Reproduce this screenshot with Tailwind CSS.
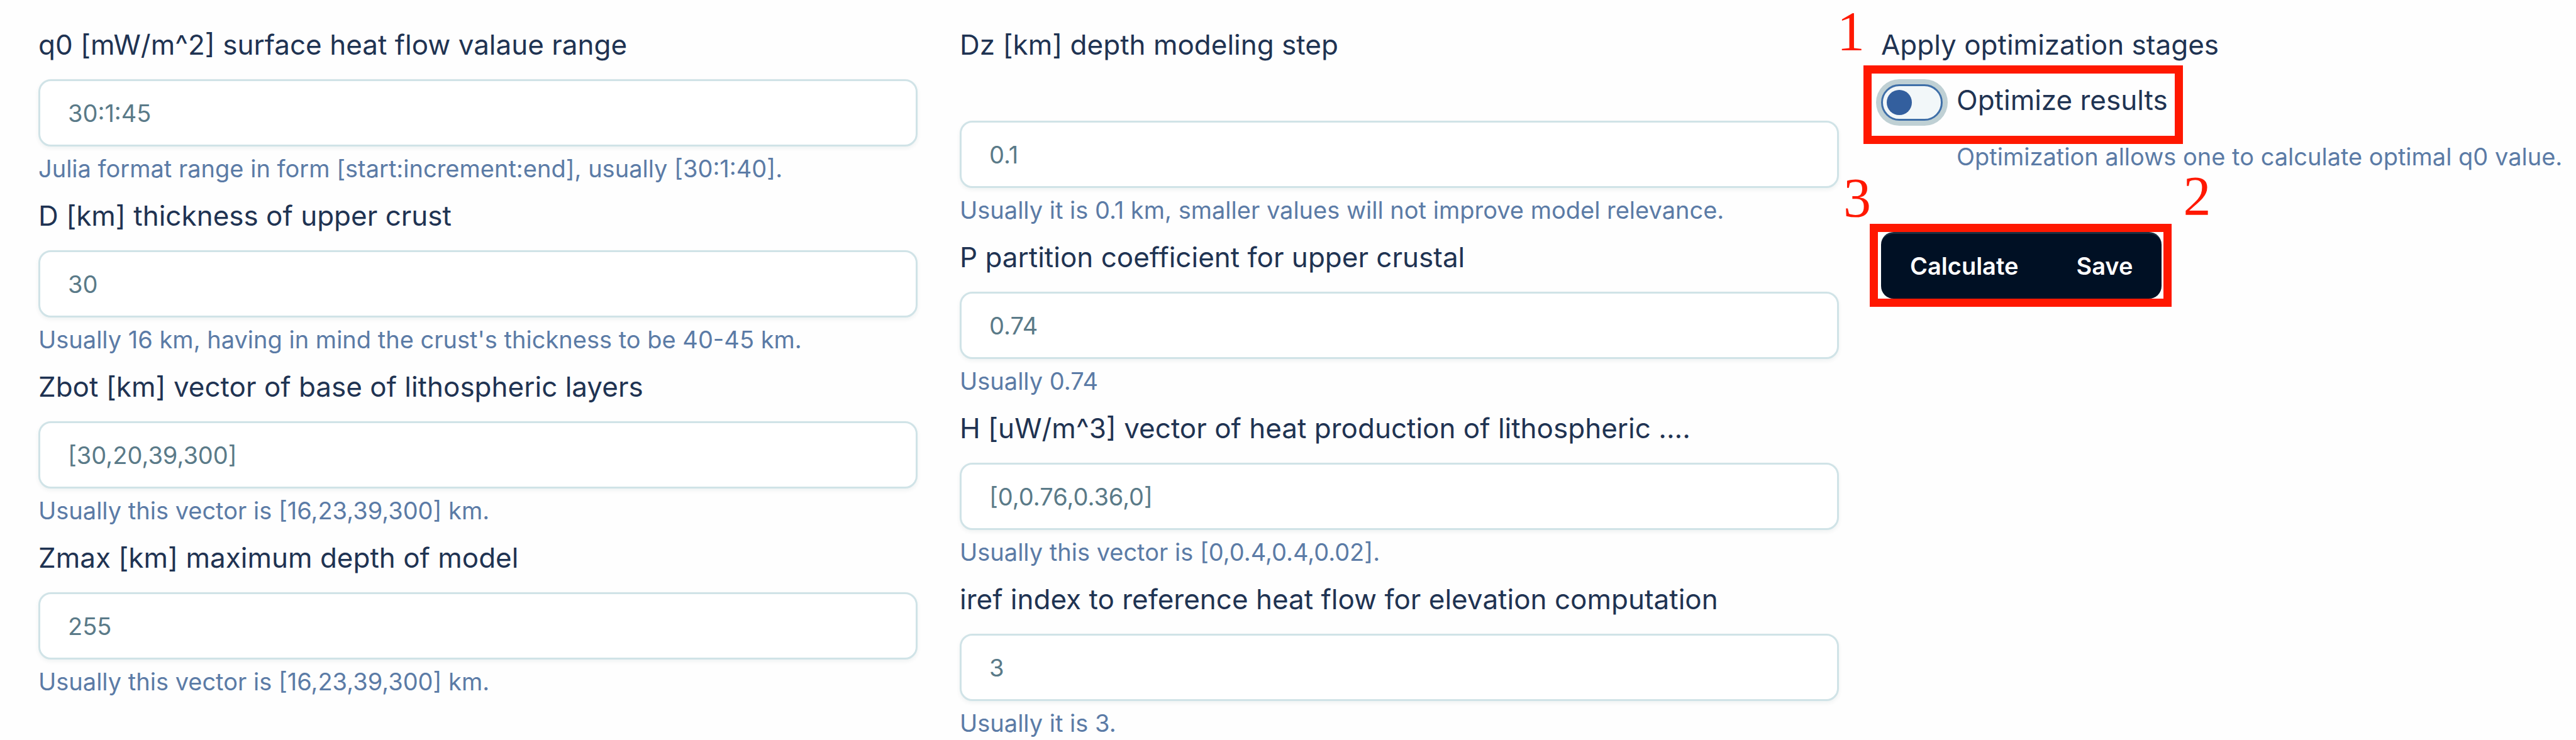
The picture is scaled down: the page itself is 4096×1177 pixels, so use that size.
<!DOCTYPE html>
<html lang="en">
<head>
<meta charset="utf-8">
<title>Model parameters</title>
<script src="https://cdn.jsdelivr.net/npm/@tailwindcss/browser@4"></script>
</head>
<body class="bg-[#fefefe] font-['Inter',sans-serif] text-[#1f3352]">
<form class="grid grid-cols-[1398fr_1398fr_1105fr] gap-x-[67px] pt-[38px] pl-[61px]">
  <section class="flex flex-col gap-[14px]">
    <div class="flex flex-col">
      <label for="q0" class="mb-[22px] text-[44px] leading-[66px]">q0 [mW/m^2] surface heat flow valaue range</label>
      <input id="q0" value="30:1:45" class="h-[107px] w-full rounded-[20px] border-3 border-[#d0e3e7] bg-white px-[44px] text-[38px] text-[#5a7a88] shadow-[0_3px_6px_#00404010]">
      <p class="mt-[7px] text-[38px] leading-[56px] text-[#5b7ba6]">Julia format range in form [start:increment:end], usually [30:1:40].</p>
    </div>
    <div class="flex flex-col">
      <label for="d" class="mb-[22px] text-[44px] leading-[66px]">D [km] thickness of upper crust</label>
      <input id="d" value="30" class="h-[107px] w-full rounded-[20px] border-3 border-[#d0e3e7] bg-white px-[44px] text-[38px] text-[#5a7a88] shadow-[0_3px_6px_#00404010]">
      <p class="mt-[7px] text-[38px] leading-[56px] text-[#5b7ba6]">Usually 16 km, having in mind the crust's thickness to be 40-45 km.</p>
    </div>
    <div class="flex flex-col">
      <label for="zbot" class="mb-[22px] text-[44px] leading-[66px]">Zbot [km] vector of base of lithospheric layers</label>
      <input id="zbot" value="[30,20,39,300]" class="h-[107px] w-full rounded-[20px] border-3 border-[#d0e3e7] bg-white px-[44px] text-[38px] text-[#5a7a88] shadow-[0_3px_6px_#00404010]">
      <p class="mt-[7px] text-[38px] leading-[56px] text-[#5b7ba6]">Usually this vector is [16,23,39,300] km.</p>
    </div>
    <div class="flex flex-col">
      <label for="zmax" class="mb-[22px] text-[44px] leading-[66px]">Zmax [km] maximum depth of model</label>
      <input id="zmax" value="255" class="h-[107px] w-full rounded-[20px] border-3 border-[#d0e3e7] bg-white px-[44px] text-[38px] text-[#5a7a88] shadow-[0_3px_6px_#00404010]">
      <p class="mt-[7px] text-[38px] leading-[56px] text-[#5b7ba6]">Usually this vector is [16,23,39,300] km.</p>
    </div>
  </section>

  <section class="flex flex-col gap-[14px]">
    <div class="flex flex-col">
      <label for="dz" class="mb-[88px] text-[44px] leading-[66px]">Dz [km] depth modeling step</label>
      <input id="dz" value="0.1" class="h-[107px] w-full rounded-[20px] border-3 border-[#d0e3e7] bg-white px-[44px] text-[38px] text-[#5a7a88] shadow-[0_3px_6px_#00404010]">
      <p class="mt-[7px] text-[38px] leading-[56px] text-[#5b7ba6]">Usually it is 0.1 km, smaller values will not improve model relevance.</p>
    </div>
    <div class="flex flex-col">
      <label for="p" class="mb-[22px] text-[44px] leading-[66px]">P partition coefficient for upper crustal</label>
      <input id="p" value="0.74" class="h-[107px] w-full rounded-[20px] border-3 border-[#d0e3e7] bg-white px-[44px] text-[38px] text-[#5a7a88] shadow-[0_3px_6px_#00404010]">
      <p class="mt-[7px] text-[38px] leading-[56px] text-[#5b7ba6]">Usually 0.74</p>
    </div>
    <div class="flex flex-col">
      <label for="h" class="mb-[22px] text-[44px] leading-[66px]">H [uW/m^3] vector of heat production of lithospheric ....</label>
      <input id="h" value="[0,0.76,0.36,0]" class="h-[107px] w-full rounded-[20px] border-3 border-[#d0e3e7] bg-white px-[44px] text-[38px] text-[#5a7a88] shadow-[0_3px_6px_#00404010]">
      <p class="mt-[7px] text-[38px] leading-[56px] text-[#5b7ba6]">Usually this vector is [0,0.4,0.4,0.02].</p>
    </div>
    <div class="flex flex-col">
      <label for="iref" class="mb-[22px] text-[44px] leading-[66px]">iref index to reference heat flow for elevation computation</label>
      <input id="iref" value="3" class="h-[107px] w-full rounded-[20px] border-3 border-[#d0e3e7] bg-white px-[44px] text-[38px] text-[#5a7a88] shadow-[0_3px_6px_#00404010]">
      <p class="mt-[7px] text-[38px] leading-[56px] text-[#5b7ba6]">Usually it is 3.</p>
    </div>
  </section>

  <section class="flex flex-col items-start">
    <p class="mb-[22px] text-[44px] leading-[66px]">Apply optimization stages</p>
    <div class="relative flex items-end gap-[22px]">
      <span class="relative flex h-[58px] w-[98px]">
        <input id="optimize" type="checkbox" role="switch" class="h-[58px] w-[98px] appearance-none rounded-full border-3 border-[#3f6fa8] bg-[#f2f7f9] ring-8 ring-[#bfd0d4]">
        <span class="pointer-events-none absolute top-[9px] left-[9px] size-[40px] rounded-full bg-[#335f9e]"></span>
      </span>
      <label for="optimize" class="text-[44px] leading-[66px]">Optimize results</label>
      <span class="pointer-events-none absolute -top-[22px] -right-[24px] -bottom-[37px] -left-[28px] border-13 border-[#ff1800]"></span>
      <span class="absolute -top-[108px] -left-[70px] font-['Liberation_Serif',serif] text-[88px] leading-[64px] text-[#ff1800]">1</span>
    </div>
    <p class="mt-[29px] ml-[120px] text-[38px] leading-[56px] whitespace-nowrap text-[#5b7ba6]">Optimization allows one to calculate optimal q0 value.</p>
    <div class="relative mt-[92px] flex">
      <button type="button" class="h-[106px] rounded-l-[20px] border-t-3 border-[#1c3042] bg-[#001024] px-[46px] text-[38px] font-semibold text-white">Calculate</button>
      <button type="button" class="h-[106px] rounded-r-[20px] border-t-3 border-[#1c3042] bg-[#001024] px-[46px] text-[38px] font-semibold text-white">Save</button>
      <span class="pointer-events-none absolute -top-[13px] -right-[16px] -bottom-[13px] -left-[18px] border-13 border-[#ff1800]"></span>
      <span class="absolute -top-[86px] -left-[60px] font-['Liberation_Serif',serif] text-[88px] leading-[64px] text-[#ff1800]">3</span>
      <span class="absolute -top-[89px] left-full ml-[34px] font-['Liberation_Serif',serif] text-[88px] leading-[64px] text-[#ff1800]">2</span>
    </div>
  </section>
</form>
</body>
</html>
